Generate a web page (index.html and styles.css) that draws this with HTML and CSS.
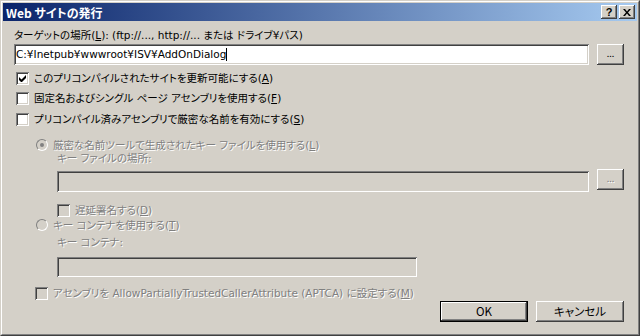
FILE: index.html
```html
<!DOCTYPE html>
<html lang="ja">
<head>
  <meta charset="UTF-8">
  <title>Web サイトの発行</title>
  <link rel="stylesheet" href="styles.css">
</head>
<body>
  <div class="dialog">
    <div class="frame">
      <div class="titlebar">
        <span class="title">Web サイトの発行</span>
        <div class="caption-buttons">
          <span class="cap-btn help">?</span>
          <span class="cap-btn">
            <svg width="8" height="7" viewBox="0 0 8 7"><path d="M0 0h2l2 2.5L6 0h2L5 3.5 8 7H6L4 4.5 2 7H0l3-3.5z" fill="#000"/></svg>
          </span>
        </div>
      </div>

      <div class="content">
        <div class="label target-label">ターゲットの場所(<u>L</u>): (ftp://..., http://... または ドライブ¥パス)</div>
        <div class="field-row row-target">
          <div class="textbox wide"><span>C:¥Inetpub¥wwwroot¥ISV¥AddOnDialog</span><span class="caret"></span></div>
          <div class="button browse">...</div>
        </div>

        <div class="check row-check first">
          <span class="box"><svg width="7" height="7" viewBox="0 0 7 7"><path d="M0 2v3l2 2h1l4-4V0L2.5 4.5z" fill="#000"/></svg></span>
          <span>このプリコンパイルされたサイトを更新可能にする(<u>A</u>)</span>
        </div>
        <div class="check row-check second">
          <span class="box"></span>
          <span>固定名およびシングル ページ アセンブリを使用する(<u>F</u>)</span>
        </div>
        <div class="check row-check third">
          <span class="box"></span>
          <span>プリコンパイル済みアセンブリで厳密な名前を有効にする(<u>S</u>)</span>
        </div>

        <div class="group disabled">
          <div class="radio row-radio1">
            <span class="dot selected"></span>
            <span>厳密な名前ツールで生成されたキー ファイルを使用する(<u>L</u>)</span>
          </div>
          <div class="label indent row-keylabel">キー ファイルの場所:</div>
          <div class="field-row indent row-keyfile">
            <div class="textbox wide"></div>
            <div class="button browse raised-up">...</div>
          </div>
          <div class="check indent row-delay">
            <span class="box"></span>
            <span>遅延署名する(<u>D</u>)</span>
          </div>
          <div class="radio row-radio2">
            <span class="dot"></span>
            <span>キー コンテナを使用する(<u>T</u>)</span>
          </div>
          <div class="label indent row-contlabel">キー コンテナ:</div>
          <div class="field-row indent row-container">
            <div class="textbox short"></div>
          </div>
          <div class="check row-aptca">
            <span class="box"></span>
            <span>アセンブリを AllowPartiallyTrustedCallerAttribute (APTCA) に設定する(<u>M</u>)</span>
          </div>
        </div>

        <div class="actions">
          <div class="button default"><span>OK</span></div>
          <div class="button">キャンセル</div>
        </div>
      </div>
    </div>
  </div>
</body>
</html>
```

FILE: styles.css
```css
* {
  box-sizing: border-box;
}
body {
  margin: 0;
  font-family: "DejaVu Sans", "Noto Sans CJK JP", sans-serif;
  font-size: 10.5px;
  line-height: 13px;
  color: #000;
  font-feature-settings: "palt";
}
.dialog {
  width: 640px;
  height: 336px;
  background: #d4d0c8;
  border: 1px solid;
  border-color: #d4d0c8 #404040 #404040 #d4d0c8;
}
.frame {
  height: 100%;
  border: 1px solid;
  border-color: #fff #808080 #808080 #fff;
  padding: 1px;
}
.titlebar {
  height: 18px;
  display: flex;
  align-items: center;
  justify-content: space-between;
  background: linear-gradient(to right, #0a246a, #a6caf0);
  color: #fff;
  padding: 0 2px 0 3px;
}
.title {
  font-family: "Noto Sans CJK JP", sans-serif;
  font-weight: bold;
  font-size: 12px;
}
.caption-buttons {
  display: flex;
  gap: 2px;
}
.cap-btn {
  width: 16px;
  height: 14px;
  display: flex;
  align-items: center;
  justify-content: center;
  background: #d4d0c8;
  color: #000;
  font-weight: bold;
  font-size: 11px;
  font-family: "Liberation Sans", sans-serif;
  box-shadow: inset -1px -1px #404040, inset 1px 1px #fff, inset -2px -2px #808080;
}
.content {
  padding: 0 13px 0 11px;
}
.label {
  height: 14px;
  white-space: nowrap;
}
.target-label {
  margin-top: 8px;
}
.field-row {
  display: flex;
  align-items: flex-start;
  gap: 8px;
}
.row-target {
  margin-top: 1px;
}
.textbox {
  height: 21px;
  background: #fff;
  padding: 3px 2px;
  display: flex;
  align-items: center;
  white-space: nowrap;
  box-shadow: inset 1px 1px #808080, inset -1px -1px #fff, inset 2px 2px #404040, inset -2px -2px #d4d0c8;
}
.textbox.wide {
  flex: 1;
}
.textbox.short {
  width: 360px;
  height: 20px;
}
.caret {
  width: 1px;
  height: 13px;
  background: #000;
}
.button {
  height: 21px;
  display: flex;
  align-items: center;
  justify-content: center;
  background: #d4d0c8;
  font-family: "Noto Sans CJK JP", sans-serif;
  font-size: 11.5px;
  box-shadow: inset -1px -1px #404040, inset 1px 1px #fff, inset -2px -2px #808080;
}
.browse {
  width: 27px;
  font-size: 9px;
  padding-bottom: 2px;
}
.raised-up {
  margin-top: -2px;
}
.check, .radio {
  display: flex;
  align-items: center;
  gap: 5px;
  white-space: nowrap;
}
.row-check {
  height: 16px;
  padding-left: 2px;
}
.first {
  margin-top: 5px;
}
.second {
  margin-top: 4px;
}
.third {
  margin-top: 5px;
}
.box {
  width: 13px;
  height: 13px;
  flex: none;
  background: #fff;
  display: flex;
  align-items: center;
  justify-content: center;
  box-shadow: inset 1px 1px #808080, inset -1px -1px #fff, inset 2px 2px #404040, inset -2px -2px #d4d0c8;
}
.dot {
  width: 12px;
  height: 12px;
  flex: none;
  border-radius: 50%;
  border: 1px solid;
  border-color: #808080 #fff #fff #808080;
  background: #d4d0c8;
  position: relative;
}
.dot.selected::after {
  content: "";
  position: absolute;
  left: 3px;
  top: 3px;
  width: 4px;
  height: 4px;
  border-radius: 50%;
  background: #808080;
}
.disabled {
  color: #808080;
}
.disabled .check > span:last-child,
.disabled .radio > span:last-child,
.disabled .label {
  text-shadow: 1px 1px 0 #fff;
}
.disabled .box,
.disabled .textbox {
  background: #d4d0c8;
}
.disabled .browse {
  color: #808080;
  text-shadow: 1px 1px 0 #fff;
}
.group .radio {
  height: 14px;
  padding-left: 22px;
}
.row-radio1 {
  margin-top: 11px;
}
.indent {
  padding-left: 43px;
}
.row-keylabel {
  height: 13px;
}
.row-keyfile {
  margin-top: 6px;
}
.row-delay {
  height: 14px;
  margin-top: 11px;
  gap: 5px;
}
.row-radio2 {
  margin-top: 1px;
}
.row-contlabel {
  height: 13px;
  margin-top: 4px;
}
.row-container {
  margin-top: 8px;
}
.row-aptca {
  height: 14px;
  margin-top: 9px;
  padding-left: 21px;
}
.actions {
  display: flex;
  justify-content: flex-end;
  gap: 8px;
  margin-top: 1px;
}
.actions .button {
  width: 88px;
}
.actions .default {
  border: 1px solid #000;
  box-shadow: inset -1px -1px #404040, inset 1px 1px #fff, inset -2px -2px #808080;
}
```
